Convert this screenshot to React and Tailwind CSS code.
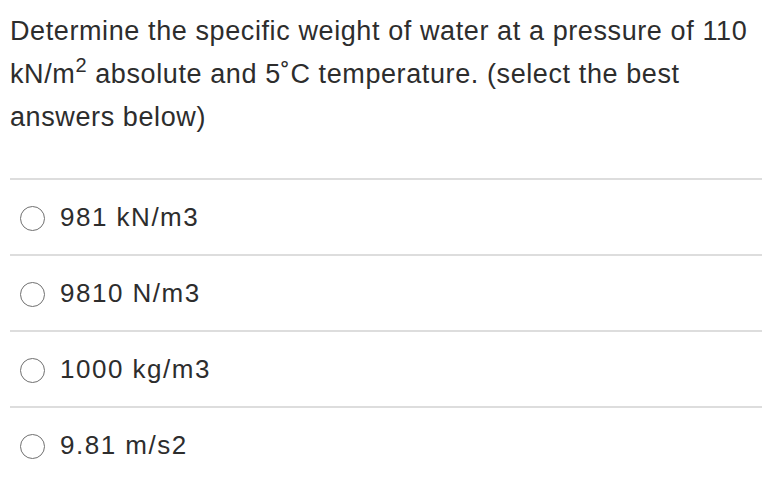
const options = ["981 kN/m3", "9810 N/m3", "1000 kg/m3", "9.81 m/s2"];

export default function App() {
  return (
    <div className="w-[782px] h-[480px] bg-white text-[#2d2d2d] font-['Liberation_Sans',Arial,sans-serif] overflow-hidden">
      <div className="px-[10px] pt-[10px] text-[27px] leading-[43px] tracking-[0.6px] whitespace-nowrap">
        Determine the specific weight of water at a pressure of 110
        <br />
        kN/m<sup className="text-[20px] align-baseline relative -top-[11px] leading-none">2</sup> absolute and 5˚C temperature. (select the best
        <br />
        answers below)
      </div>
      <div className="mt-[39px] mx-[10px] w-[752px]">
        {options.map((o) => (
          <div key={o} className="border-t-2 border-[#dddddd] h-[76px] flex items-center pl-[10px]">
            <span className="w-[25px] h-[25px] rounded-full border-[1.5px] border-[#707070] bg-white shrink-0 mt-[2px]"></span>
            <span className="ml-[15px] text-[26px] tracking-[1.5px]">{o}</span>
          </div>
        ))}
      </div>
    </div>
  );
}
